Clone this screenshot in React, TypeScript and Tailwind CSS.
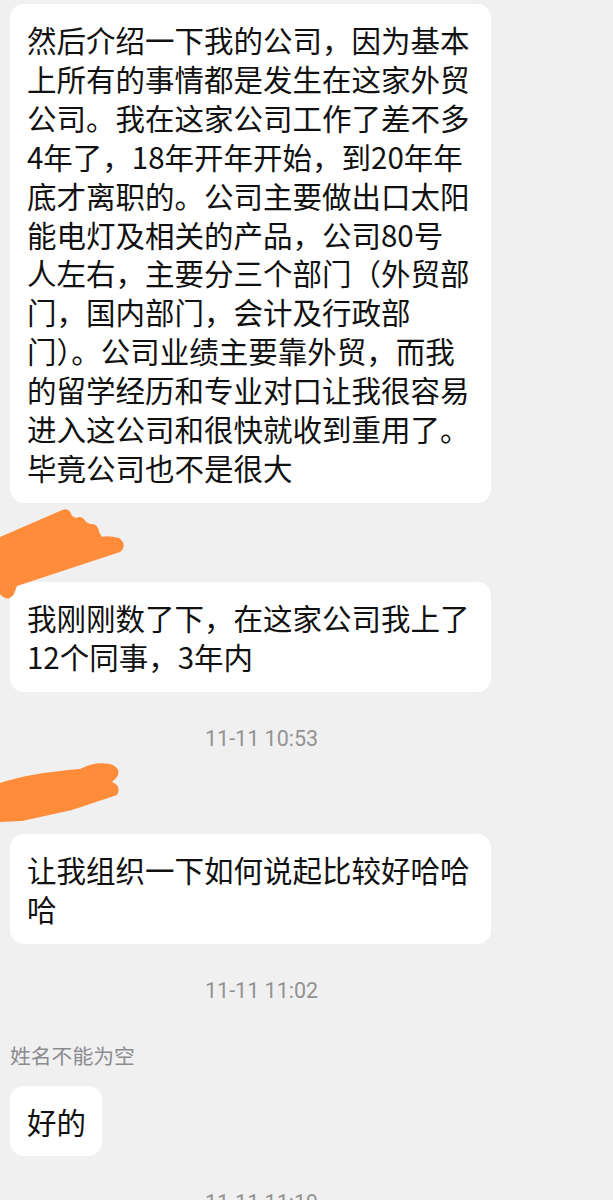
import React from "react";

const cjk = { fontFamily: '"Noto Sans CJK SC", "Noto Sans", sans-serif' };
const ts = { fontFamily: 'Roboto, "Noto Sans CJK SC", sans-serif' };

function Bubble({ lines, fit }: { lines: string[]; fit?: boolean }) {
  return (
    <div
      className={`${fit ? "w-fit" : "w-[481px]"} bg-white rounded-[14px] pl-[17px] pr-[16px] py-[16px] text-[29.5px] leading-[38.9px] text-[#111111]`}
      style={cjk}
    >
      {lines.map((l, i) => (
        <div key={i} className="whitespace-nowrap">
          {l}
        </div>
      ))}
    </div>
  );
}

function Time({ t }: { t: string }) {
  return (
    <div className="mt-[32px] h-[30px] leading-[30px] pl-[195px] text-[21.5px] text-[#939393]" style={ts}>
      {t}
    </div>
  );
}

function Scribble1() {
  return (
    <svg className="absolute left-[-10px] top-[-34px]" width="140" height="100" viewBox="0 0 140 100">
      <path
        d="M0 32 L60 6 Q69 1 72 11 L76 13 Q82 10 86 17 L90 19 Q98 18 99 27 L102 32 Q107 30 119 33 Q128 40 120 47 L17 81 L14 89 Q9 96 3 92 L0 89 Z"
        fill="#ff8c3a"
      />
    </svg>
  );
}

function Scribble2() {
  return (
    <svg className="absolute left-[-10px] top-[-35px]" width="140" height="80" viewBox="0 0 140 80">
      <path
        d="M0 27 Q30 17 80 13 Q95 5 110 8 Q122 12 117 21 Q114 24 112 26 Q122 30 117 39 L72 54 L22 65 L0 66 Z"
        fill="#ff8c3a"
      />
    </svg>
  );
}

export default function App() {
  return (
    <div className="min-h-[1200px] w-[613px] bg-[#f0f0f0] px-[10px] pt-[4px] overflow-hidden">
      <Bubble
        lines={[
          "然后介绍一下我的公司，因为基本",
          "上所有的事情都是发生在这家外贸",
          "公司。我在这家公司工作了差不多",
          "4年了，18年开年开始，到20年年",
          "底才离职的。公司主要做出口太阳",
          "能电灯及相关的产品，公司80号",
          "人左右，主要分三个部门（外贸部",
          "门，国内部门，会计及行政部",
          "门）。公司业绩主要靠外贸，而我",
          "的留学经历和专业对口让我很容易",
          "进入这公司和很快就收到重用了。",
          "毕竟公司也不是很大",
        ]}
      />
      <div className="relative mt-[36px] h-[24px] mb-[19px]">
        <Scribble1 />
      </div>
      <Bubble lines={["我刚刚数了下，在这家公司我上了", "12个同事，3年内"]} />
      <Time t="11-11 10:53" />
      <div className="relative mt-[37px] h-[24px] mb-[19px]">
        <Scribble2 />
      </div>
      <Bubble lines={["让我组织一下如何说起比较好哈哈", "哈"]} />
      <Time t="11-11 11:02" />
      <div
        className="mt-[37px] h-[24px] leading-[24px] mb-[19px] text-[20.8px] text-[#8b8b90]"
        style={cjk}
      >
        姓名不能为空
      </div>
      <Bubble fit lines={["好的"]} />
      <Time t="11-11 11:19" />
    </div>
  );
}
